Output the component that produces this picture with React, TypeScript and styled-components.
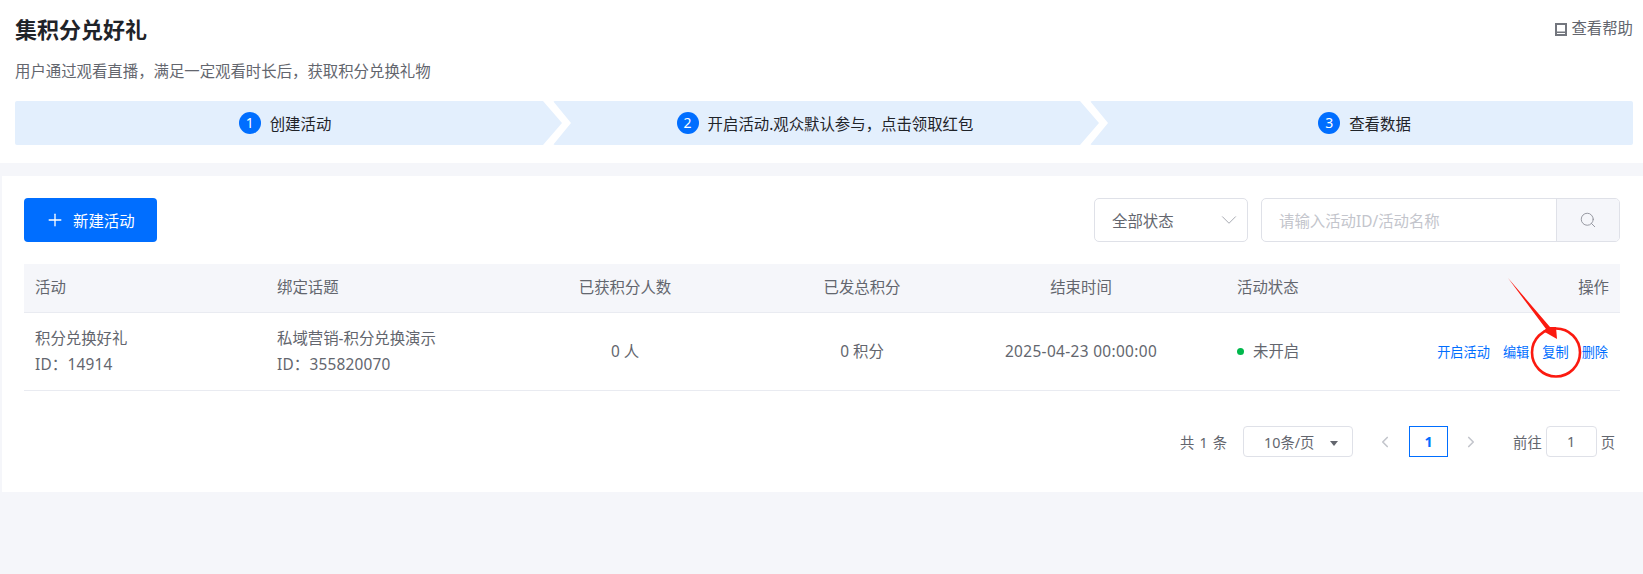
import React from "react";
import styled, { createGlobalStyle } from "styled-components";
import { Plus, ChevronDown, Search, ChevronLeft, ChevronRight } from "lucide-react";

const FONT = `"Noto Sans", "Noto Sans CJK SC", sans-serif`;

const Global = createGlobalStyle`
  html, body { margin: 0; padding: 0; background: #f5f6fa; }
  body { font-family: ${FONT}; font-size: 15.4px; color: #63666e; }
  * { box-sizing: border-box; }
`;

const Page = styled.div`
  position: relative;
  width: 1643px;
  height: 574px;
  overflow: hidden;
  background: #f5f6fa;
`;

const Header = styled.header`
  height: 163px;
  background: #fff;
  padding: 14px 10px 0 15px;
`;

const TitleRow = styled.div`
  display: flex;
  justify-content: space-between;
  align-items: center;
  height: 30px;
`;

const Title = styled.h1`
  margin: 0;
  font-size: 22px;
  font-weight: 700;
  color: #1f2329;
  line-height: 30px;
`;

const Help = styled.a`
  display: flex;
  align-items: center;
  gap: 4px;
  color: #63666e;
  font-size: 15.4px;
  line-height: 30px;
`;

const Subtitle = styled.p`
  margin: 17px 0 18px;
  font-size: 15.4px;
  line-height: 22px;
  color: #63666e;
`;

const Steps = styled.div`
  display: flex;
  height: 44px;
`;

const Step = styled.div<{ $width: number; $first?: boolean; $last?: boolean; $offset: number }>`
  display: flex;
  align-items: center;
  justify-content: center;
  gap: 9px;
  width: ${(p) => p.$width}px;
  flex: none;
  margin-left: ${(p) => (p.$first ? 0 : -9)}px;
  padding-right: ${(p) => (p.$last ? 0 : p.$offset)}px;
  padding-left: ${(p) => (p.$last ? p.$offset : 0)}px;
  background: #e3effd;
  border-radius: 2px;
  color: #1f2329;
  font-size: 15.4px;
  clip-path: ${(p) =>
    p.$first
      ? "polygon(0 0, calc(100% - 19px) 0, 100% 50%, calc(100% - 19px) 100%, 0 100%)"
      : p.$last
      ? "polygon(0 0, 100% 0, 100% 100%, 0 100%, 18px 50%)"
      : "polygon(0 0, calc(100% - 19px) 0, 100% 50%, calc(100% - 19px) 100%, 0 100%, 18px 50%)"};
`;

const StepNum = styled.span`
  display: flex;
  align-items: center;
  justify-content: center;
  width: 22px;
  height: 22px;
  border-radius: 50%;
  background: #006eff;
  color: #fff;
  font-size: 14px;
  line-height: 22px;
`;

const Card = styled.section`
  height: 316px;
  margin: 13px 0 0 2px;
  background: #fff;
  padding: 22px 23px 0 22px;
`;

const Toolbar = styled.div`
  display: flex;
  justify-content: space-between;
  align-items: center;
  height: 44px;
`;

const PrimaryButton = styled.button`
  display: flex;
  align-items: center;
  gap: 8px;
  width: 133px;
  height: 44px;
  padding: 0 0 0 21px;
  border: 0;
  border-radius: 4px;
  background: #006eff;
  color: #fff;
  font-family: ${FONT};
  font-size: 15.4px;
`;

const Filters = styled.div`
  display: flex;
  gap: 13px;
`;

const StatusSelect = styled.div`
  display: flex;
  align-items: center;
  justify-content: space-between;
  width: 154px;
  height: 44px;
  padding: 0 5px 0 17px;
  border: 1px solid #dfe1e8;
  border-radius: 5px;
  color: #63666e;
`;

const SearchBox = styled.div`
  display: flex;
  width: 359px;
  height: 44px;
  border: 1px solid #dfe1e8;
  border-radius: 5px;
  overflow: hidden;
`;

const SearchPlaceholder = styled.div`
  flex: 1;
  display: flex;
  align-items: center;
  padding-left: 17px;
  color: #c3c5cc;
`;

const SearchButton = styled.div`
  display: flex;
  align-items: center;
  justify-content: center;
  width: 63px;
  background: #f5f6fa;
  border-left: 1px solid #dfe1e8;
  color: #8d9099;
`;

const Row = styled.div<{ $head?: boolean }>`
  display: grid;
  grid-template-columns: 242px 196px 326px 148px 290px 1fr;
  align-items: center;
  width: 1596px;
  height: ${(p) => (p.$head ? 49 : 78)}px;
  background: ${(p) => (p.$head ? "#f5f6fa" : "#fff")};
  border-bottom: 1px solid #e9ebf1;
  margin-top: ${(p) => (p.$head ? 22 : 0)}px;
`;

const Cell = styled.div<{ $align?: string; $last?: boolean }>`
  padding: 0 ${(p) => (p.$last ? 12 : 11)}px 0 11px;
  text-align: ${(p) => p.$align || "left"};
  line-height: 26px;
  color: #63666e;
  white-space: nowrap;
`;

const IdText = styled.div`
  letter-spacing: 0.2px;
`;

const DateText = styled.span`
  letter-spacing: 0.35px;
`;

const Split = styled.div`
  display: flex;
  justify-content: space-between;
`;

const Status = styled.div`
  display: flex;
  align-items: center;
  gap: 9px;
`;

const Dot = styled.span`
  width: 7px;
  height: 7px;
  border-radius: 50%;
  background: #00b84c;
`;

const Actions = styled.div`
  display: flex;
  justify-content: flex-end;
  gap: 13px;
`;

const ActionLink = styled.a`
  color: #006eff;
  font-size: 13.2px;
  white-space: nowrap;
`;

const Pager = styled.div`
  display: flex;
  align-items: center;
  justify-content: flex-end;
  height: 31px;
  margin: 35px 0 0 0;
  padding-right: 5px;
  font-size: 14.3px;
  color: #63666e;
`;

const Total = styled.span`
  word-spacing: 1.5px;
`;

const PageSize = styled.div`
  position: relative;
  display: flex;
  align-items: center;
  width: 110px;
  height: 31px;
  margin: 0 20px 0 16px;
  padding-left: 20px;
  border: 1px solid #dfe1e8;
  border-radius: 4px;
`;

const Caret = styled.span`
  position: absolute;
  right: 14px;
  top: 14px;
  border-left: 4px solid transparent;
  border-right: 4px solid transparent;
  border-top: 5px solid #63666e;
`;

const PageArrow = styled.span`
  display: flex;
  justify-content: center;
  width: 24px;
  color: #c3c5cc;
`;

const CurrentPage = styled.span`
  display: flex;
  align-items: center;
  justify-content: center;
  width: 39px;
  height: 31px;
  margin: 0 11px 0 12px;
  border: 1px solid #006eff;
  color: #006eff;
  font-weight: 700;
`;

const GoLabel = styled.span`
  margin-left: 30px;
`;

const GoInput = styled.span`
  display: flex;
  align-items: center;
  justify-content: center;
  width: 51px;
  height: 31px;
  margin: 0 4px;
  border: 1px solid #dfe1e8;
  border-radius: 4px;
`;

const Annotation = styled.svg`
  position: absolute;
  left: 1500px;
  top: 270px;
  pointer-events: none;
`;

const BookIcon = () => (
  <svg width="12" height="13" viewBox="0 0 12 13" fill="none" stroke="#73767e">
    <rect x="1" y="1" width="10" height="11" strokeWidth="2" />
    <path d="M1 9.25h10" strokeWidth="1.5" />
  </svg>
);

export default function App() {
  return (
    <Page>
      <Global />
      <Header>
        <TitleRow>
          <Title>集积分兑好礼</Title>
          <Help>
            <BookIcon />
            查看帮助
          </Help>
        </TitleRow>
        <Subtitle>用户通过观看直播，满足一定观看时长后，获取积分兑换礼物</Subtitle>
        <Steps>
          <Step $first $width={547} $offset={7}>
            <StepNum>1</StepNum>创建活动
          </Step>
          <Step $width={546} $offset={2}>
            <StepNum>2</StepNum>开启活动.观众默认参与，点击领取红包
          </Step>
          <Step $last $width={543} $offset={6}>
            <StepNum>3</StepNum>查看数据
          </Step>
        </Steps>
      </Header>
      <Card>
        <Toolbar>
          <PrimaryButton>
            <Plus size={20} strokeWidth={1.6} />
            新建活动
          </PrimaryButton>
          <Filters>
            <StatusSelect>
              全部状态
              <ChevronDown size={26} strokeWidth={0.9} color="#a5a8b0" />
            </StatusSelect>
            <SearchBox>
              <SearchPlaceholder>请输入活动ID/活动名称</SearchPlaceholder>
              <SearchButton>
                <Search size={18} strokeWidth={1.2} />
              </SearchButton>
            </SearchBox>
          </Filters>
        </Toolbar>
        <Row $head>
          <Cell>活动</Cell>
          <Cell>绑定话题</Cell>
          <Cell $align="center">已获积分人数</Cell>
          <Cell $align="center">已发总积分</Cell>
          <Cell $align="center">结束时间</Cell>
          <Cell>
            <Split>
              <span>活动状态</span>
              <span>操作</span>
            </Split>
          </Cell>
        </Row>
        <Row>
          <Cell>
            <div>积分兑换好礼</div>
            <IdText>ID：14914</IdText>
          </Cell>
          <Cell>
            <div>私域营销-积分兑换演示</div>
            <IdText>ID：355820070</IdText>
          </Cell>
          <Cell $align="center">0 人</Cell>
          <Cell $align="center">0 积分</Cell>
          <Cell $align="center">
            <DateText>2025-04-23 00:00:00</DateText>
          </Cell>
          <Cell $last>
            <Split>
              <Status>
                <Dot />
                未开启
              </Status>
              <Actions>
                <ActionLink>开启活动</ActionLink>
                <ActionLink>编辑</ActionLink>
                <ActionLink>复制</ActionLink>
                <ActionLink>删除</ActionLink>
              </Actions>
            </Split>
          </Cell>
        </Row>
        <Pager>
          <Total>共 1 条</Total>
          <PageSize>
            10条/页
            <Caret />
          </PageSize>
          <PageArrow>
            <ChevronLeft size={18} strokeWidth={2.2} />
          </PageArrow>
          <CurrentPage>1</CurrentPage>
          <PageArrow>
            <ChevronRight size={18} strokeWidth={2.2} />
          </PageArrow>
          <GoLabel>前往</GoLabel>
          <GoInput>1</GoInput>
          <span>页</span>
        </Pager>
      </Card>
      <Annotation width="90" height="120" viewBox="0 0 90 120">
        <circle cx="56" cy="82.5" r="24" fill="none" stroke="#fb1a10" strokeWidth="2.6" />
        <path d="M8 8 L50 57 L56 57 L57 69 L43 61 L46 59 Z" fill="#fb1a10" />
      </Annotation>
    </Page>
  );
}
